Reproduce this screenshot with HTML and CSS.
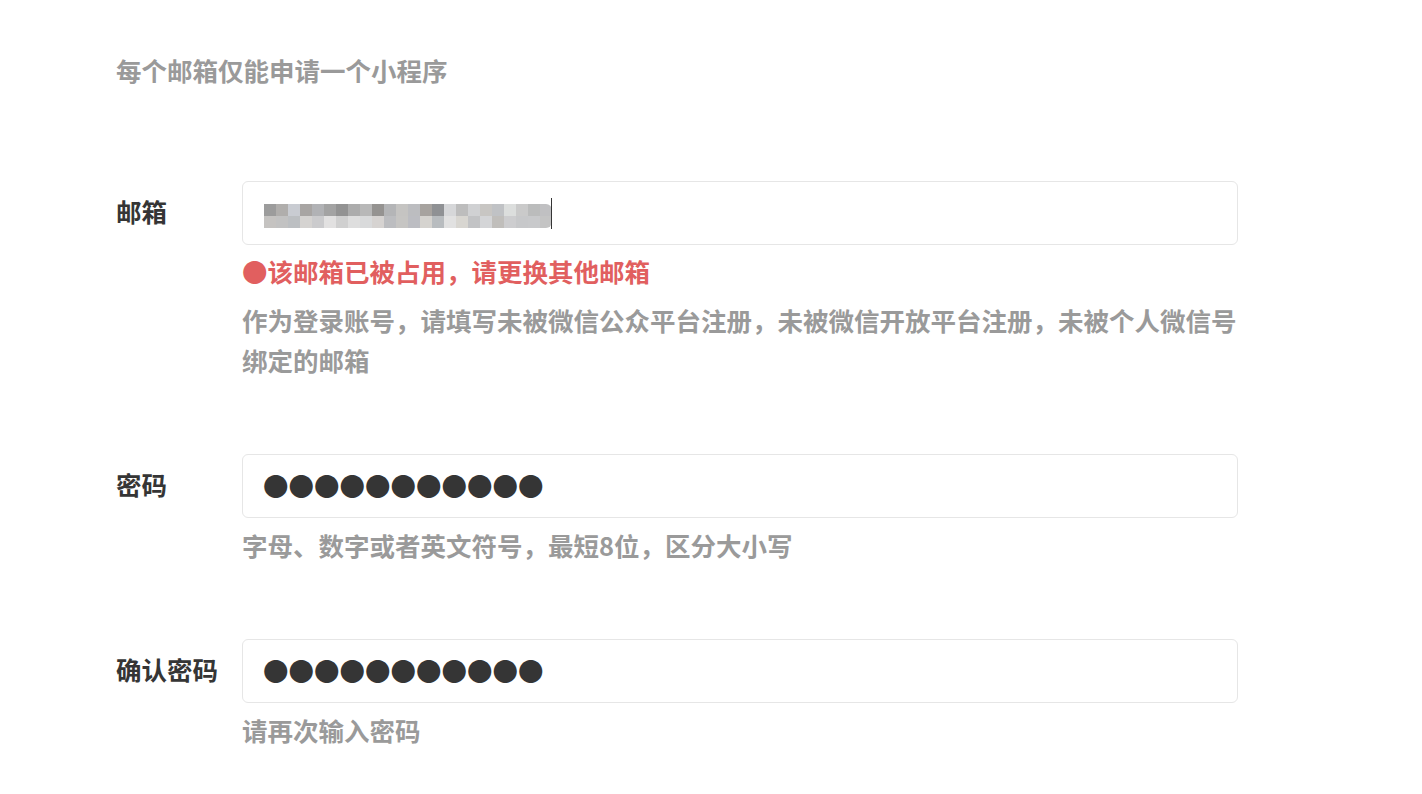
FILE: index.html
```html
<!DOCTYPE html>
<html lang="zh-CN">
<head>
<meta charset="utf-8">
<title>注册</title>
<link rel="stylesheet" href="styles.css">
</head>
<body>
<div class="page">
  <div class="intro">每个邮箱仅能申请一个小程序</div>
  <div class="form">
    <div class="row">
      <div class="label">邮箱</div>
      <div class="field">
        <div class="input">
          <div class="mosaic">
            <div class="tiles">
              <i style="background:#9c9c9c"></i><i style="background:#b0aeac"></i><i style="background:#c9ccd2"></i><i style="background:#a8a5a3"></i><i style="background:#b1b2b5"></i><i style="background:#a3a3a3"></i><i style="background:#939393"></i><i style="background:#acacac"></i><i style="background:#b8b8b8"></i><i style="background:#959391"></i><i style="background:#b4b5b7"></i><i style="background:#c5c4c2"></i><i style="background:#bcbdc0"></i><i style="background:#a7a39f"></i><i style="background:#8f9194"></i><i style="background:#d6d7d9"></i><i style="background:#bdbdbd"></i><i style="background:#d0d1d3"></i><i style="background:#c8c6c3"></i><i style="background:#c0c2c5"></i><i style="background:#dcdedd"></i><i style="background:#cacaca"></i><i style="background:#bbbcbc"></i><i style="background:#c0c0c2"></i>
              <i style="background:#c5c3c1"></i><i style="background:#c2c2c2"></i><i style="background:#bcbfc2"></i><i style="background:#d5d3d1"></i><i style="background:#cbcbcd"></i><i style="background:#e2e1e1"></i><i style="background:#d0d0d0"></i><i style="background:#dedede"></i><i style="background:#d9dadb"></i><i style="background:#d6d3d1"></i><i style="background:#bcbdc0"></i><i style="background:#c6c5c3"></i><i style="background:#bcbdc2"></i><i style="background:#d5d3cf"></i><i style="background:#b8bcbf"></i><i style="background:#e1e1e1"></i><i style="background:#d8d6d1"></i><i style="background:#c2c3c5"></i><i style="background:#d4d5d7"></i><i style="background:#c0bebb"></i><i style="background:#cdcdcf"></i><i style="background:#c7c8ca"></i><i style="background:#c8c9cb"></i><i style="background:#c4c4c4"></i>
            </div>
          </div>
          <span class="caret"></span>
        </div>
        <div class="error"><span class="dot">●</span>该邮箱已被占用，请更换其他邮箱</div>
        <div class="tip tip-after-error">作为登录账号，请填写未被微信公众平台注册，未被微信开放平台注册，未被个人微信号绑定的邮箱</div>
      </div>
    </div>
    <div class="row">
      <div class="label">密码</div>
      <div class="field">
        <div class="input"><span class="dots">●●●●●●●●●●●</span></div>
        <div class="tip tip-first">字母、数字或者英文符号，最短8位，区分大小写</div>
      </div>
    </div>
    <div class="row">
      <div class="label">确认密码</div>
      <div class="field">
        <div class="input"><span class="dots">●●●●●●●●●●●</span></div>
        <div class="tip tip-first">请再次输入密码</div>
      </div>
    </div>
  </div>
</div>
</body>
</html>
```

FILE: styles.css
```css
html, body {
  margin: 0;
  padding: 0;
  background: #ffffff;
}

body {
  font-family: "Noto Sans CJK SC", "Noto Sans", "Liberation Sans", sans-serif;
  font-size: 25.5px;
  font-weight: 700;
  line-height: 40px;
  color: #353535;
}

.page {
  padding: 50px 0 0 116px;
}

.intro {
  color: #9a9a9a;
}

.form {
  margin-top: 91px;
}

.row {
  display: grid;
  grid-template-columns: 126px 996px;
  margin-bottom: 74px;
}

.label {
  line-height: 60px;
  color: #353535;
}

.input {
  height: 64px;
  box-sizing: border-box;
  border: 1px solid #e6e6e6;
  border-radius: 6px;
  padding: 0 20px;
  display: flex;
  align-items: center;
}

.mosaic {
  margin-top: 6px;
  margin-left: 1px;
}

.tiles {
  display: grid;
  grid-template-columns: repeat(24, 12px);
  grid-auto-rows: 12px;
  border-radius: 0 6px 6px 0;
  overflow: hidden;
}

.tiles i {
  display: block;
}

.caret {
  width: 1px;
  height: 31px;
  background: #353535;
  margin-left: -1px;
}

.dots {
  color: #353535;
  margin-top: -2px;
}

.error {
  margin-top: 6px;
  color: #e15f5f;
}

.dot {
  color: #e15f5f;
}

.tip {
  color: #9a9a9a;
}

.tip-after-error {
  margin-top: 9px;
}

.tip-first {
  margin-top: 7px;
}
```
